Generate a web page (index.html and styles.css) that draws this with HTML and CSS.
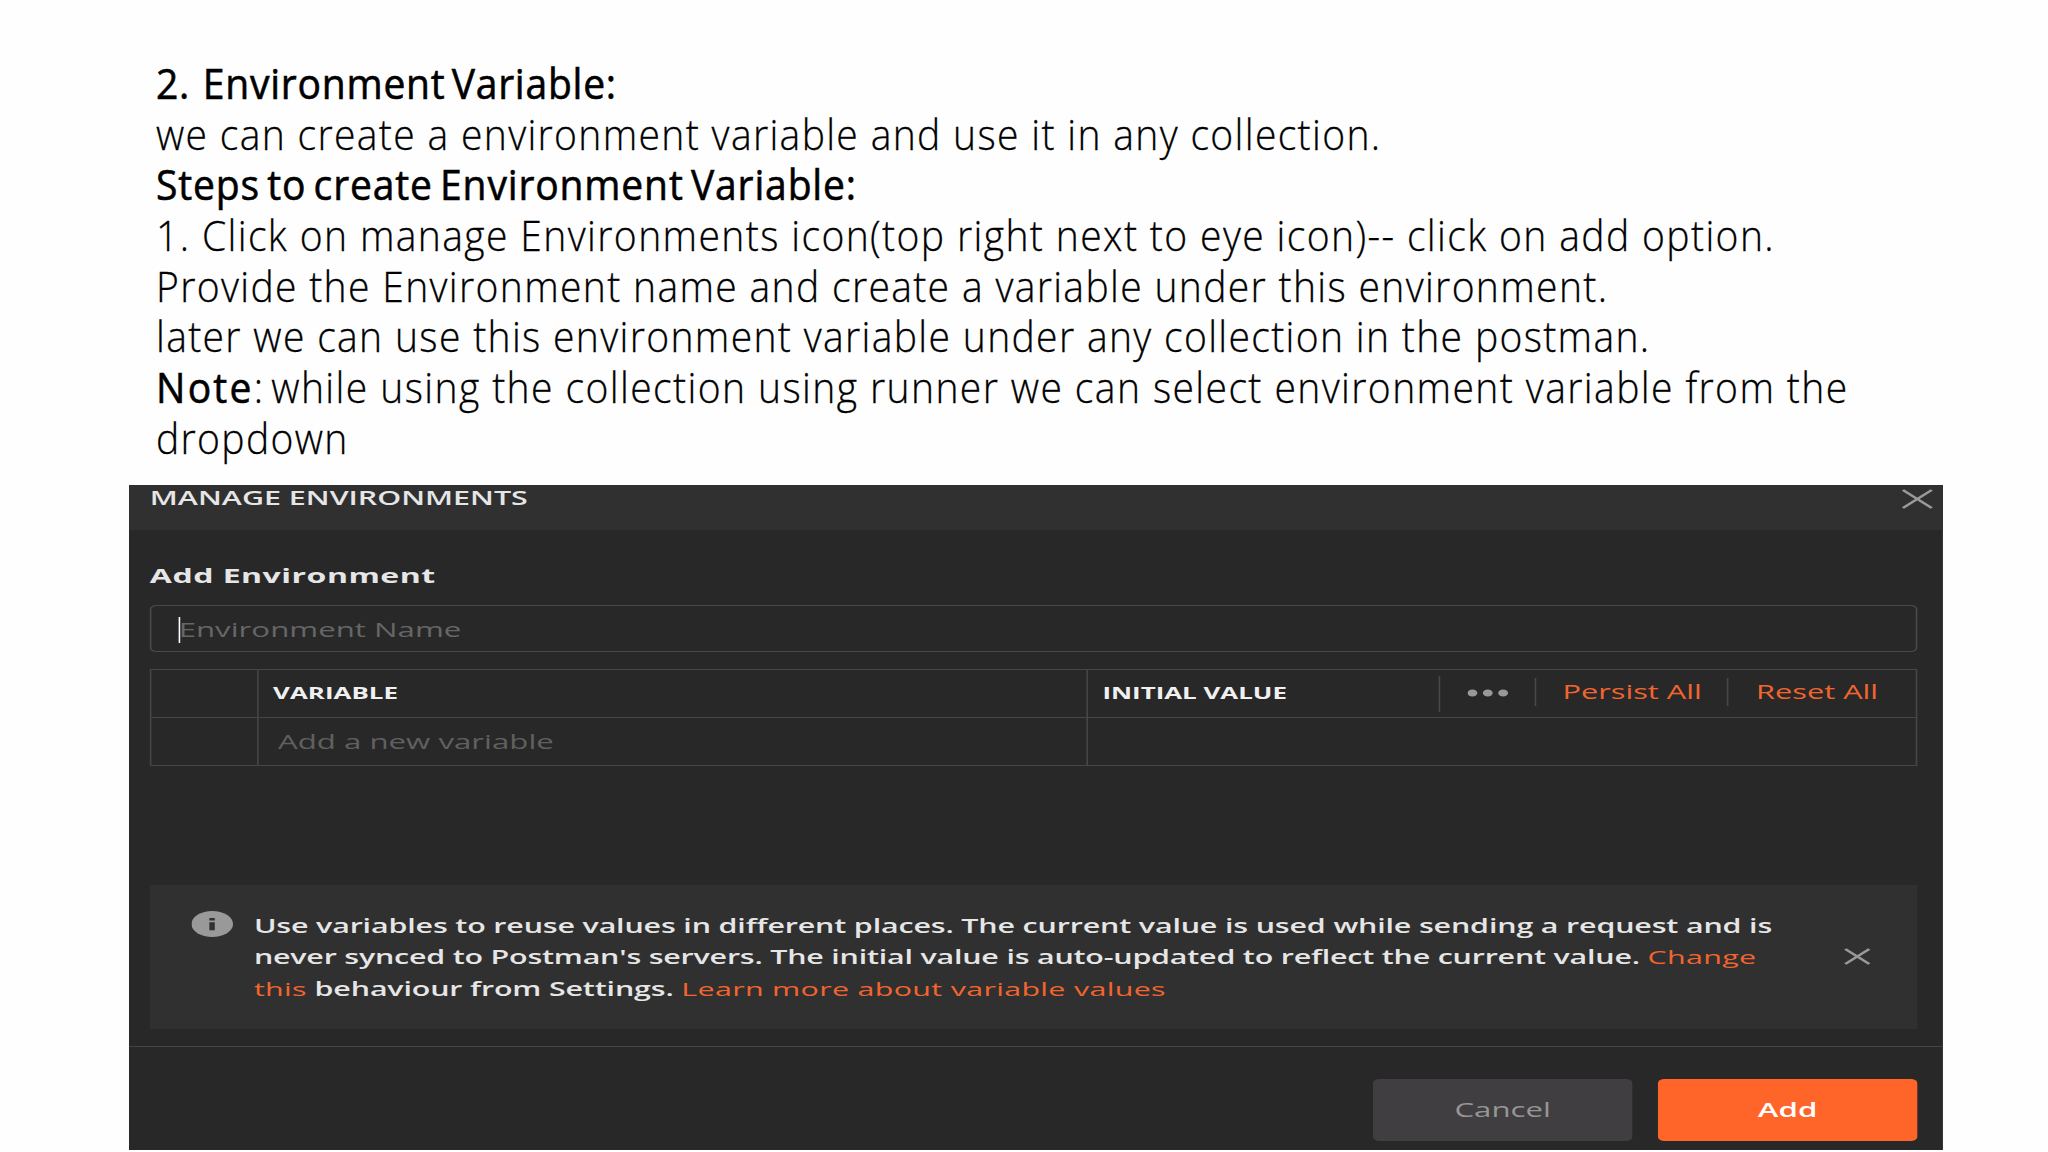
FILE: index.html
```html
<!DOCTYPE html>
<html lang="en">
<head>
  <meta charset="UTF-8">
  <title>Environment Variable</title>
  <link rel="stylesheet" href="styles.css">
</head>
<body>

<div class="notes">
  <h1 class="line title"><span class="number">2.</span> Environment Variable:</h1>
  <p class="line intro">we can create a environment variable and use it in any collection.</p>
  <h2 class="line steps">Steps to create Environment Variable:</h2>
  <p class="line step-one">1. Click on manage Environments icon(top right next to eye icon)-- click on add option.</p>
  <p class="line">Provide the Environment name and create a variable under this environment.</p>
  <p class="line">later we can use this environment variable under any collection in the postman.</p>
  <p class="line note"><strong>Note</strong><span class="colon">:</span> while using the collection using runner we can select environment variable from the</p>
  <p class="line">dropdown</p>
</div>

<div class="modal">
  <div class="modal-header">
    <span class="modal-title">MANAGE ENVIRONMENTS</span>
    <svg class="close" width="20" height="20" viewBox="0 0 20 20">
      <path d="M1 1 L19 19 M19 1 L1 19" />
    </svg>
  </div>

  <div class="modal-body">
    <h3>Add Environment</h3>
    <div class="name-input"><span class="caret"></span>Environment Name</div>

    <div class="table">
      <div class="cell"></div>
      <div class="cell head">VARIABLE</div>
      <div class="cell head value-head">
        <span>INITIAL VALUE</span>
        <div class="actions">
          <div class="more">
            <svg width="26" height="8" viewBox="0 0 26 8">
              <ellipse cx="3.1" cy="4" rx="3.1" ry="3.5" />
              <ellipse cx="12.7" cy="4" rx="3.1" ry="3.5" />
              <ellipse cx="22.3" cy="4" rx="3.1" ry="3.5" />
            </svg>
          </div>
          <a class="persist">Persist All</a>
          <a class="reset">Reset All</a>
        </div>
      </div>
      <div class="cell"></div>
      <div class="cell new">Add a new variable</div>
      <div class="cell"></div>
    </div>

    <div class="info">
      <svg class="info-icon" width="26" height="26" viewBox="0 0 26 26">
        <circle cx="13" cy="13" r="13" />
        <path d="M11.2 7h3.4v2.6h-3.4z M11.2 11.2h3.4v8h-3.4z" />
      </svg>
      <div class="info-text">
        <div>Use variables to reuse values in different places. The current value is used while sending a request and is</div>
        <div class="second">never synced to Postman's servers. The initial value is auto-updated to reflect the current value. <a>Change</a></div>
        <div><a>this</a> behaviour from Settings. <a>Learn more about variable values</a></div>
      </div>
      <svg class="dismiss" width="17" height="17" viewBox="0 0 17 17">
        <path d="M1 1 L16 16 M16 1 L1 16" />
      </svg>
    </div>
  </div>

  <div class="modal-footer">
    <div class="btn cancel">Cancel</div>
    <div class="btn add">Add</div>
  </div>
</div>

</body>
</html>
```
FILE: styles.css
```css
body {
  margin: 0;
  height: 1152px;
  overflow: hidden;
  background-color: #fefefe;
  font-family: "Open Sans", sans-serif;
}

.notes {
  height: 427px;
  padding: 58px 0 0 156px;
}

/* slide text is set slightly condensed */
.line {
  margin: 0;
  height: 50.7px;
  line-height: 50.7px;
  font-size: 42px;
  font-weight: 300;
  color: #000;
  white-space: nowrap;
  letter-spacing: 1.43px;
  transform: scaleX(0.93);
  transform-origin: left;
  -webkit-text-stroke: 0.3px #000;
}

.title, .steps {
  font-weight: 500;
  -webkit-text-stroke: 0.6px #000;
}

.title {
  letter-spacing: 0.8px;
  word-spacing: -5px;
}

.number {
  margin-right: 7px;
}

.steps {
  letter-spacing: 0.9px;
  word-spacing: -4px;
}

.step-one {
  letter-spacing: 1.48px;
}

.note strong {
  font-weight: 500;
  letter-spacing: 2.4px;
  -webkit-text-stroke: 0.6px #000;
}

.note {
  letter-spacing: 1.5px;
}

.colon {
  margin-right: -5px;
}

/* dialog is laid out at 1133px and stretched to the slide width */
.modal {
  width: 1133px;
  height: 665px;
  margin-left: 129px;
  display: flex;
  flex-direction: column;
  background-color: #282828;
  transform: scaleX(1.601);
  transform-origin: left;
  color: #e6e6e6;
  font-size: 19.5px;
}

.modal-header {
  height: 45px;
  display: flex;
  justify-content: space-between;
  align-items: flex-start;
  padding: 0 6px 0 13px;
  box-sizing: border-box;
  background-color: #303030;
}

.modal-title {
  font-size: 19px;
  font-weight: 600;
  line-height: 27px;
}

.close, .dismiss {
  fill: none;
  stroke: #999;
  stroke-width: 2;
}

.close {
  margin-top: 4px;
}

.modal-body {
  height: 516px;
  padding: 0 16px 0 13px;
  box-sizing: border-box;
}

h3 {
  margin: 0;
  padding-top: 33px;
  height: 42px;
  font-size: 20px;
  font-weight: 700;
  line-height: 26px;
  letter-spacing: 0.3px;
}

.name-input {
  position: relative;
  height: 47px;
  box-sizing: border-box;
  padding-left: 17px;
  border: 1px solid #4a4a4a;
  border-radius: 4px;
  line-height: 47px;
  color: #666;
}

.caret {
  position: absolute;
  left: 16.5px;
  top: 11px;
  width: 1.4px;
  height: 26px;
  background-color: #fff;
}

.table {
  display: grid;
  grid-template-columns: 67px 518px 1fr;
  grid-template-rows: 48px 48px;
  margin-top: 17px;
  border: solid #464646;
  border-width: 1px 0 0 1px;
}

.cell {
  border: solid #464646;
  border-width: 0 1px 1px 0;
  line-height: 47px;
}

.head {
  padding-left: 9px;
  font-size: 16.2px;
  font-weight: 700;
  color: #f0f0f0;
}

.value-head {
  display: flex;
  justify-content: space-between;
}

.new {
  padding-left: 12px;
  color: #606060;
}

.actions {
  display: flex;
  align-items: center;
  font-size: 19.2px;
  font-weight: 400;
}

.actions svg {
  fill: #999;
}

.more {
  height: 36px;
  width: 60px;
  box-sizing: border-box;
  padding: 0 0 2px 17px;
  display: flex;
  align-items: center;
  border-left: 1px solid #484848;
}

.persist, .reset {
  height: 28px;
  line-height: 28px;
  margin-top: -3px;
  border-left: 1px solid #484848;
}

.persist {
  padding: 0 16px;
}

.reset {
  padding: 0 23.5px 0 17px;
}

a {
  color: #f2652f;
}

.info {
  height: 144px;
  margin-top: 119px;
  display: flex;
  box-sizing: border-box;
  padding: 26px 0 0 25.5px;
  background-color: #303030;
}

.info-icon {
  fill: #999;
}

.info-icon path {
  fill: #303030;
}

.info-text {
  width: 992.5px;
  margin: 0 0 0 13.5px;
  font-size: 19px;
  font-weight: 600;
  line-height: 31.4px;
  letter-spacing: -0.1px;
  white-space: nowrap;
}

.info-text .second {
  letter-spacing: -0.13px;
}

.info-text a {
  font-weight: 400;
  letter-spacing: 0.2px;
}

.dismiss {
  margin-top: 37px;
}

.modal-footer {
  flex: 1;
  display: flex;
  justify-content: flex-end;
  gap: 16px;
  padding: 32px 16px 0 0;
  border-top: 1px solid #444;
}

.btn {
  width: 162px;
  height: 62px;
  border-radius: 4px;
  line-height: 61px;
  text-align: center;
}

.cancel {
  background-color: #403e40;
  color: #969696;
}

.add {
  background-color: #ff6428;
  color: #fff;
  font-weight: 600;
}
```
